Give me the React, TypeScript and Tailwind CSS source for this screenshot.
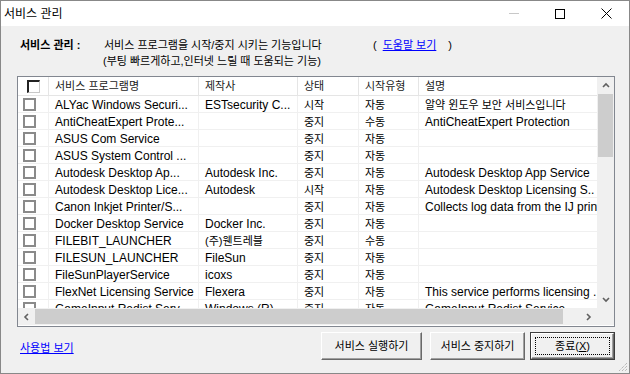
import React from "react";

const KR = /[\u3131-\uD79D]/;
const LAT = /[A-Za-z]/;

type Row = [string, string, string, string, string];
const rows: Row[] = [
  ["ALYac Windows Securi...", "ESTsecurity C...", "시작", "자동", "알약 윈도우 보안 서비스입니다"],
  ["AntiCheatExpert Prote...", "", "중지", "수동", "AntiCheatExpert Protection"],
  ["ASUS Com Service", "", "중지", "자동", ""],
  ["ASUS System Control ...", "", "중지", "자동", ""],
  ["Autodesk Desktop Ap...", "Autodesk Inc.", "중지", "자동", "Autodesk Desktop App Service"],
  ["Autodesk Desktop Lice...", "Autodesk", "시작", "자동", "Autodesk Desktop Licensing S.."],
  ["Canon Inkjet Printer/S...", "", "중지", "자동", "Collects log data from the IJ printer driver"],
  ["Docker Desktop Service", "Docker Inc.", "중지", "자동", ""],
  ["FILEBIT_LAUNCHER", "(주)웬트레블", "중지", "수동", ""],
  ["FILESUN_LAUNCHER", "FileSun", "중지", "자동", ""],
  ["FileSunPlayerService", "icoxs", "중지", "자동", ""],
  ["FlexNet Licensing Service", "Flexera", "중지", "자동", "This service performs licensing ..."],
  ["GameInput Redist Serv...", "Windows (R)...", "중지", "자동", "GameInput Redist Service"],
];

const widths = ["w-[150px]", "w-[99px]", "w-[61px]", "w-[60px]", "w-[240px]"];

function sizeFor(t: string) {
  return KR.test(t) && !LAT.test(t) ? "text-[11px]" : "text-[12px]";
}

function Chevron({ dir }: { dir: "up" | "down" | "left" | "right" }) {
  const pts: Record<string, string> = {
    up: "1,5 4,2 7,5",
    down: "1,2 4,5 7,2",
    left: "5,1 2,4 5,7",
    right: "2,1 5,4 2,7",
  };
  return (
    <svg width="8" height="8" viewBox="0 0 8 8">
      <polyline points={pts[dir]} fill="none" stroke="#606060" strokeWidth="1.6" />
    </svg>
  );
}

function Btn({ label, w, def }: { label: React.ReactNode; w: string; def?: boolean }) {
  if (def) {
    return (
      <div className={`${w} h-[28px] border border-[#3c3c3c] flex`}>
        <div className="flex-1 relative border-t border-l border-white border-r border-b border-r-[#696969] border-b-[#696969] shadow-[inset_-1px_-1px_#a0a0a0] bg-[#f0f0f0] flex items-center justify-center text-[12px]">
          <div className="absolute inset-[3px] border border-dotted border-black" />
          {label}
        </div>
      </div>
    );
  }
  return (
    <div
      className={`${w} h-[28px] border-t border-l border-white border-r border-b border-r-[#696969] border-b-[#696969] shadow-[inset_-1px_-1px_#a0a0a0] bg-[#f0f0f0] flex items-center justify-center text-[11px]`}
    >
      {label}
    </div>
  );
}

export default function App() {
  return (
    <div className="w-[630px] h-[374px] border border-[#888888] bg-[#f0f0f0] flex flex-col relative font-['Liberation_Sans','Noto_Sans_CJK_KR',sans-serif] text-black overflow-hidden">
      {/* Title bar */}
      <div className="h-[25px] bg-white flex items-center shrink-0">
        <div className="pl-[3px] text-[12px] flex-1">서비스 관리</div>
        <div className="w-[46px] h-full flex items-center justify-center">
          <div className="w-[10px] h-px bg-[#c8c8c8]" />
        </div>
        <div className="w-[46px] h-full flex items-center justify-center">
          <div className="w-[10px] h-[10px] border border-black" />
        </div>
        <div className="w-[46px] h-full flex items-center justify-center">
          <svg width="11" height="11" viewBox="0 0 11 11">
            <path d="M0.5 0.5 L10.5 10.5 M10.5 0.5 L0.5 10.5" stroke="#000" strokeWidth="1" />
          </svg>
        </div>
      </div>

      {/* Body */}
      <div className="flex flex-col pl-[16px]">
        {/* Info */}
        <div className="mt-[11px] flex text-[11px] leading-[16px]">
          <div className="w-[87px] pl-[3px] font-bold">서비스 관리 :</div>
          <div className="flex flex-col">
            <div className="flex">
              <span className="w-[269px]">서비스 프로그램을 시작/중지 시키는 기능입니다</span>
              <span>(</span>
              <span className="ml-[6px] text-[#0000ff] underline">도움말 보기</span>
              <span className="ml-[12px]">)</span>
            </div>
            <div className="-ml-[1px]">(부팅 빠르게하고,인터넷 느릴 때 도움되는 기능)</div>
          </div>
        </div>

        {/* List view */}
        <div className="mt-[7px] w-[598px] h-[251px] border border-[#828790] bg-white grid grid-cols-[579px_17px] grid-rows-[231px_17px]">
          <div className="overflow-hidden flex flex-col">
            {/* Header */}
            <div className="flex h-[19px] shrink-0 border-b border-[#e5e5e5] text-[11px] text-[#1a1a1a]">
              <div className="w-[31px] shrink-0 border-r border-[#e5e5e5] flex items-center justify-center">
                <div className="w-[13px] h-[13px] bg-white border-l-2 border-t-2 border-[#222] border-r border-b border-r-[#c8c8c8] border-b-[#c8c8c8]" />
              </div>
              {["서비스 프로그램명", "제작사", "상태", "시작유형", "설명"].map((h, i) => (
                <div
                  key={h}
                  className={`${widths[i]} shrink-0 border-r border-[#e5e5e5] pl-[6px] flex items-center whitespace-nowrap overflow-hidden`}
                >
                  {h}
                </div>
              ))}
            </div>
            {/* Rows */}
            {rows.map((r, ri) => (
              <div key={ri} className="flex h-[17px] shrink-0 border-b border-[#f0f0f0]">
                <div className="w-[31px] shrink-0 border-r border-[#f0f0f0] flex items-center pl-[5px]">
                  <div className="w-[13px] h-[13px] border-2 border-[#8a8a8a] bg-white" />
                </div>
                {r.map((c, ci) => (
                  <div
                    key={ci}
                    className={`${widths[ci]} ${sizeFor(c)} shrink-0 border-r border-[#f0f0f0] pl-[6px] pt-[1px] leading-[16px] whitespace-nowrap overflow-hidden`}
                  >
                    {c}
                  </div>
                ))}
              </div>
            ))}
          </div>

          {/* Vertical scrollbar */}
          <div className="bg-[#f0f0f0] flex flex-col">
            <div className="h-[17px] flex items-center justify-center">
              <Chevron dir="up" />
            </div>
            <div className="flex-1 flex flex-col items-center">
              <div className="w-[15px] h-[63px] bg-[#cdcdcd]" />
            </div>
            <div className="h-[17px] flex items-center justify-center">
              <Chevron dir="down" />
            </div>
          </div>

          {/* Horizontal scrollbar */}
          <div className="bg-[#f0f0f0] flex">
            <div className="w-[17px] flex items-center justify-center">
              <Chevron dir="left" />
            </div>
            <div className="flex-1 flex items-center">
              <div className="w-[528px] h-[15px] bg-[#cdcdcd]" />
            </div>
            <div className="w-[17px] flex items-center justify-center">
              <Chevron dir="right" />
            </div>
          </div>
          <div className="bg-[#f0f0f0]" />
        </div>

        {/* Bottom */}
        <div className="mt-[5px] w-[598px] flex items-start">
          <div className="mt-[8px] ml-[3px] text-[11px] leading-[16px] text-[#0000ff] underline">사용법 보기</div>
          <div className="flex-1" />
          <Btn label="서비스 실행하기" w="w-[101px]" />
          <div className="w-[8px]" />
          <Btn label="서비스 중지하기" w="w-[95px]" />
          <div className="w-[5px]" />
          <Btn
            def
            w="w-[85px]"
            label={
              <span className="text-[11px]">
                종료(<span className="underline">X</span>)
              </span>
            }
          />
        </div>
      </div>

      {/* Size grip */}
      <svg className="absolute right-[1px] bottom-[1px]" width="10" height="10" viewBox="0 0 10 10">
        <path d="M9 1 L1 9 M9 4 L4 9 M9 7 L7 9" stroke="#a0a0a0" strokeWidth="1" strokeDasharray="1 1" />
      </svg>
    </div>
  );
}
